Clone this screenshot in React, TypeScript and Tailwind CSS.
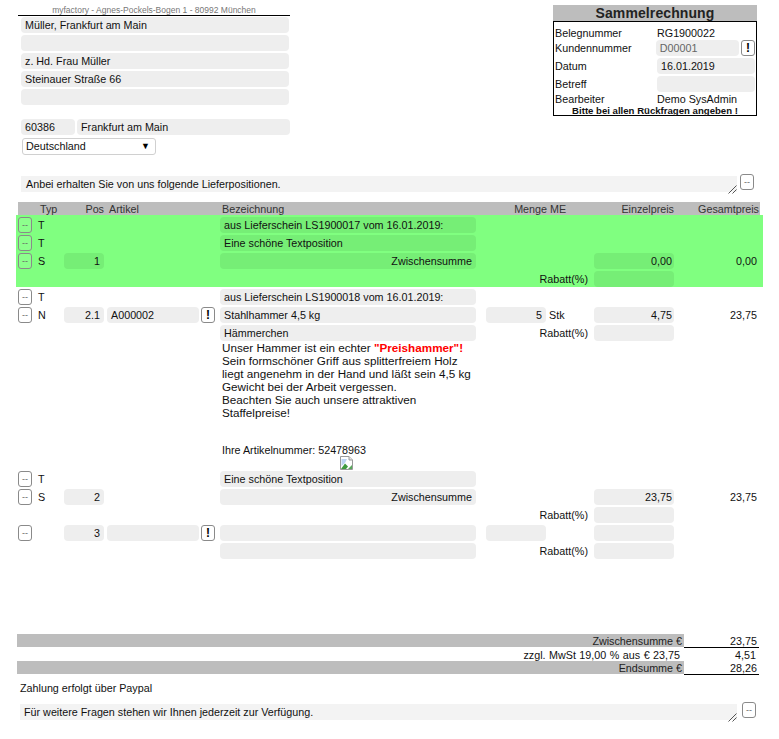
const inputBg = "bg-[#eeeeee]";
const greenBg = "bg-[#76ee76]";

function Dash({ className = "" }: { className?: string }) {
  return (
    <button className={`w-[14px] h-[16px] border border-[#8a8a8a] rounded-[3px] bg-white/10 flex items-center justify-center text-[9px] leading-none text-[#666] shrink-0 ${className}`}>
      --
    </button>
  );
}

function Excl() {
  return (
    <button className="w-[14px] h-[16px] border border-[#8a8a8a] rounded-[3px] bg-white flex items-center justify-center text-[12px] font-bold leading-none text-black shrink-0">
      !
    </button>
  );
}

function Field({ className = "", children, bg = inputBg }: { className?: string; children?: React.ReactNode; bg?: string }) {
  return (
    <div className={`h-[16px] rounded-[4px] ${bg} px-[4px] leading-[16px] whitespace-nowrap overflow-hidden ${className}`}>
      {children}
    </div>
  );
}

function Handle() {
  return (
    <svg width="9" height="9" viewBox="0 0 9 9" className="absolute right-0 bottom-[-2px]">
      <path d="M0.5 8.5 L8.5 0.5 M4.5 8.5 L8.5 4.5" stroke="#555" strokeWidth="1" fill="none" />
    </svg>
  );
}

type RowProps = {
  green?: boolean;
  btn?: boolean;
  typ?: string;
  pos?: string;
  art?: string;
  artField?: boolean;
  bez?: string;
  bezField?: boolean;
  bezRight?: boolean;
  menge?: string;
  mengeField?: boolean;
  me?: string;
  rabatt?: boolean;
  ep?: string;
  epField?: boolean;
  gp?: string;
};

function Row({ green, btn, typ, pos, art, artField, bez, bezField, bezRight, menge, mengeField, me, rabatt, ep, epField, gp }: RowProps) {
  const bg = green ? greenBg : inputBg;
  return (
    <div className="flex h-[16px] leading-[16px]">
      <div className="w-[14px] shrink-0">{btn && <Dash />}</div>
      <div className="w-[32px] pl-[6px] shrink-0">{typ}</div>
      <div className="w-[40px] shrink-0">
        {pos && <Field bg={bg} className="text-right">{pos}</Field>}
      </div>
      <div className="w-[92px] ml-[3px] shrink-0">
        {artField && <Field bg={bg}>{art}</Field>}
      </div>
      <div className="w-[14px] ml-[2px] shrink-0">{artField && <Excl />}</div>
      <div className="w-[256px] ml-[5px] shrink-0">
        {bezField && <Field bg={bg} className={bezRight ? "text-right" : ""}>{bez}</Field>}
      </div>
      {rabatt ? (
        <div className="w-[118px] shrink-0 text-right pr-[6px]">Rabatt(%)</div>
      ) : (
        <div className="w-[118px] shrink-0 flex pl-[10px]">
          <div className="w-[60px] shrink-0">{mengeField && <Field bg={bg} className="text-right">{menge}</Field>}</div>
          <div className="pl-[3px]">{me}</div>
        </div>
      )}
      <div className="w-[80px] shrink-0">
        {epField && <Field bg={bg} className="text-right pr-[2px]">{ep}</Field>}
      </div>
      <div className="w-[83px] shrink-0 text-right">{gp}</div>
    </div>
  );
}

export default function App() {
  return (
    <div className="w-[779px] h-[739px] overflow-hidden bg-white text-[10.75px] text-[#111] font-['Liberation_Sans',Arial,sans-serif]">
      {/* Head */}
      <div className="flex pt-[5px] h-[121px]">
        <div className="ml-[18px] w-[272px]">
          <div className="h-[10px] border-b border-black box-content text-[8.5px] leading-[10px] text-center text-[#777] whitespace-nowrap">
            myfactory - Agnes-Pockels-Bogen 1 - 80992 München
          </div>
          <div className="ml-[3px] mt-[1px] flex flex-col gap-[2px] w-[268px]">
            <Field>Müller, Frankfurt am Main</Field>
            <Field />
            <Field>z. Hd. Frau Müller</Field>
            <Field>Steinauer Straße 66</Field>
            <Field />
          </div>
        </div>
        <div className="ml-[263px] w-[204px] h-[111px] flex flex-col">
          <div className="h-[16px] bg-[#bdbdbd] text-center text-[14px] leading-[17px] font-bold tracking-[0.1px] text-[#222]">
            Sammelrechnung
          </div>
          <div className="h-[95px] border border-black px-[1px] pt-[3px] flex flex-col leading-[16px]">
            <div className="flex h-[15px]">
              <div className="w-[102px]">Belegnummer</div>
              <div>RG1900022</div>
            </div>
            <div className="flex h-[16px]">
              <div className="w-[102px]">Kundennummer</div>
              <Field className="w-[84px] text-[#666]">D00001</Field>
              <div className="ml-[2px]"><Excl /></div>
            </div>
            <div className="flex h-[16px] mt-[2px]">
              <div className="w-[102px]">Datum</div>
              <Field className="w-[98px]">16.01.2019</Field>
            </div>
            <div className="flex h-[16px] mt-[2px]">
              <div className="w-[102px]">Betreff</div>
              <Field className="w-[98px]" />
            </div>
            <div className="flex h-[15px] leading-[15px]">
              <div className="w-[102px]">Bearbeiter</div>
              <div>Demo SysAdmin</div>
            </div>
            <div className="h-[8px] leading-[8px] text-center text-[9.6px] font-bold whitespace-nowrap">
              Bitte bei allen Rückfragen angeben !
            </div>
          </div>
        </div>
      </div>

      {/* Place */}
      <div className="flex ml-[21px] mt-[-2px] gap-[2px]">
        <Field className="w-[54px]">60386</Field>
        <Field className="w-[213px]">Frankfurt am Main</Field>
      </div>
      <div className="relative ml-[22px] mt-[3px] w-[134px] h-[17px]">
        <select className="w-full h-full appearance-none border border-[#d0d0d0] rounded-[3px] bg-white pl-[3px] text-[10.75px] leading-[15px] text-[#111]" defaultValue="Deutschland">
          <option>Deutschland</option>
        </select>
        <span className="absolute right-[6px] top-[1px] text-[9px] leading-[15px] text-black pointer-events-none">▼</span>
      </div>

      {/* Intro */}
      <div className="flex ml-[21px] mt-[21px] h-[16px] items-start">
        <div className="relative w-[716px] h-[16px] bg-[#f3f3f3] pl-[5px] leading-[16px]">
          Anbei erhalten Sie von uns folgende Lieferpositionen.
          <Handle />
        </div>
        <Dash className="ml-[3px] mt-[-2px]" />
      </div>

      {/* Table header */}
      <div className="ml-[18px] mt-[10px] w-[742px] h-[13px] bg-[#bdbdbd] flex leading-[14px] text-[#333]">
        <div className="w-[22px] ml-[22px] shrink-0">Typ</div>
        <div className="w-[42px] text-right shrink-0">Pos</div>
        <div className="w-[113px] ml-[5px] shrink-0">Artikel</div>
        <div className="w-[272px] shrink-0">Bezeichnung</div>
        <div className="w-[53px] text-right shrink-0">Menge</div>
        <div className="w-[47px] pl-[3px] shrink-0">ME</div>
        <div className="w-[80px] text-right shrink-0">Einzelpreis</div>
        <div className="w-[85px] text-right shrink-0">Gesamtpreis</div>
      </div>

      {/* Green group */}
      <div className="ml-[16px] w-[747px] pl-[2px] pt-[2px] bg-[#80ff80] flex flex-col gap-[2px]">
        <Row green btn typ="T" bezField bez="aus Lieferschein LS1900017 vom 16.01.2019:" />
        <Row green btn typ="T" bezField bez="Eine schöne Textposition" />
        <Row green btn typ="S" pos="1" bezField bezRight bez="Zwischensumme" epField ep="0,00" gp="0,00" />
        <Row green rabatt epField />
      </div>

      {/* White rows */}
      <div className="ml-[18px] mt-[2px] flex flex-col gap-[2px]">
        <Row btn typ="T" bezField bez="aus Lieferschein LS1900018 vom 16.01.2019:" />
        <Row btn typ="N" pos="2.1" artField art="A000002" bezField bez="Stahlhammer 4,5 kg" mengeField menge="5" me="Stk" epField ep="4,75" gp="23,75" />
        <Row bezField bez="Hämmerchen" rabatt epField />
      </div>

      {/* Long text */}
      <div className="ml-[222px] w-[256px] h-[130px] leading-[13px] text-[11.7px]">
        <div>
          Unser Hammer ist ein echter <span className="font-bold text-[#ff0000]">"Preishammer"!</span>
        </div>
        <div>Sein formschöner Griff aus splitterfreiem Holz</div>
        <div>liegt angenehm in der Hand und läßt sein 4,5 kg</div>
        <div>Gewicht bei der Arbeit vergessen.</div>
        <div>Beachten Sie auch unsere attraktiven</div>
        <div>Staffelpreise!</div>
        <div className="mt-[25px] h-[12px] text-[10.75px]">Ihre Artikelnummer: 52478963</div>
        <div className="flex justify-center">
          <svg width="15" height="14" viewBox="0 0 15 14" className="mr-[8px]">
            <path d="M1.5 0.5 H10 L13.5 4 V13.5 H1.5 Z" fill="#fff" stroke="#9a9a9a" />
            <path d="M10 0.5 V4 H13.5" fill="#e6e6e6" stroke="#9a9a9a" />
            <path d="M2 13 L6 7.5 L9 10.5 L7 13 Z" fill="#3f9a3f" />
            <path d="M2.5 3 H8 L6 7 L2.5 10 Z" fill="#bcd3f2" />
            <path d="M9 13 L13 9 V13 Z" fill="#58a85a" />
          </svg>
        </div>
      </div>

      <div className="ml-[18px] flex flex-col gap-[2px]">
        <Row btn typ="T" bezField bez="Eine schöne Textposition" />
        <Row btn typ="S" pos="2" bezField bezRight bez="Zwischensumme" epField ep="23,75" gp="23,75" />
        <Row rabatt epField />
        <Row btn pos="3" artField bezField mengeField epField />
        <Row bezField rabatt epField />
      </div>

      {/* Totals */}
      <div className="ml-[17px] mt-[75px] w-[742px] flex flex-col">
        <div className="flex h-[14px] leading-[14px]">
          <div className="w-[667px] bg-[#bdbdbd] text-right pr-[2px] h-[13px] text-[#222]">Zwischensumme €</div>
          <div className="w-[75px] border-b border-black text-right pr-[2px] h-[14px]">23,75</div>
        </div>
        <div className="flex h-[13px] leading-[14px]">
          <div className="w-[667px] text-right pr-[4px] [word-spacing:0.5px]">zzgl. MwSt 19,00 % aus € 23,75</div>
          <div className="w-[75px] text-right pr-[3px]">4,51</div>
        </div>
        <div className="flex h-[14px] leading-[14px]">
          <div className="w-[667px] bg-[#bdbdbd] text-right pr-[2px] h-[13px] text-[#222]">Endsumme €</div>
          <div className="w-[75px] border-b border-black text-right pr-[2px] h-[14px]">28,26</div>
        </div>
      </div>

      <div className="ml-[20px] mt-[5px] h-[16px] leading-[16px]">Zahlung erfolgt über Paypal</div>

      <div className="flex ml-[20px] mt-[8px] h-[16px] items-start">
        <div className="relative w-[717px] h-[16px] bg-[#f3f3f3] pl-[4px] leading-[16px]">
          Für weitere Fragen stehen wir Ihnen jederzeit zur Verfügung.
          <Handle />
        </div>
        <Dash className="ml-[5px] mt-[-2px]" />
      </div>
    </div>
  );
}
